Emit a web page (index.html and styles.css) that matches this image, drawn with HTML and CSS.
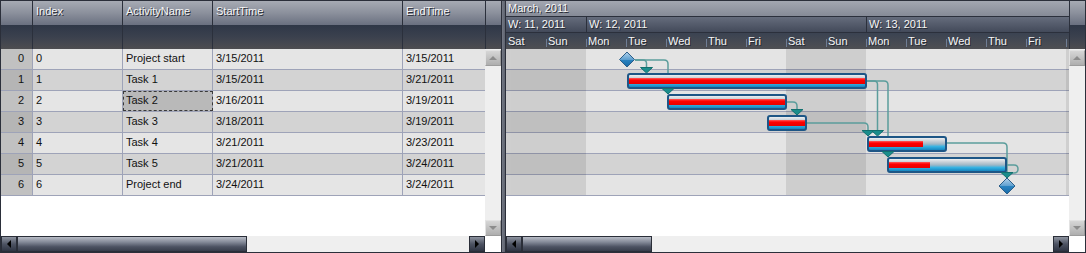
FILE: index.html
```html
<!DOCTYPE html>
<html lang="en">
<head>
  <meta charset="UTF-8">
  <title>Gantt</title>
  <link rel="stylesheet" href="styles.css">
</head>
<body>
  <div class="widget">
    <div class="grid">
      <div class="grid-head">
        <div class="hcell c-rh"></div>
        <div class="hcell c-idx">Index</div>
        <div class="hcell c-name">ActivityName</div>
        <div class="hcell c-start">StartTime</div>
        <div class="hcell c-end">EndTime</div>
        <div class="hcell c-sb"></div>
      </div>
      <div class="grid-body">
        <div class="rows">
          <div class="row"><div class="cell c-rh">0</div><div class="cell c-idx">0</div><div class="cell c-name">Project start</div><div class="cell c-start">3/15/2011</div><div class="cell c-end">3/15/2011</div></div>
          <div class="row odd"><div class="cell c-rh">1</div><div class="cell c-idx">1</div><div class="cell c-name">Task 1</div><div class="cell c-start">3/15/2011</div><div class="cell c-end">3/21/2011</div></div>
          <div class="row"><div class="cell c-rh">2</div><div class="cell c-idx">2</div><div class="cell c-name sel">Task 2</div><div class="cell c-start">3/16/2011</div><div class="cell c-end">3/19/2011</div></div>
          <div class="row odd"><div class="cell c-rh">3</div><div class="cell c-idx">3</div><div class="cell c-name">Task 3</div><div class="cell c-start">3/18/2011</div><div class="cell c-end">3/19/2011</div></div>
          <div class="row"><div class="cell c-rh">4</div><div class="cell c-idx">4</div><div class="cell c-name">Task 4</div><div class="cell c-start">3/21/2011</div><div class="cell c-end">3/23/2011</div></div>
          <div class="row odd"><div class="cell c-rh">5</div><div class="cell c-idx">5</div><div class="cell c-name">Task 5</div><div class="cell c-start">3/21/2011</div><div class="cell c-end">3/24/2011</div></div>
          <div class="row"><div class="cell c-rh">6</div><div class="cell c-idx">6</div><div class="cell c-name">Project end</div><div class="cell c-start">3/24/2011</div><div class="cell c-end">3/24/2011</div></div>
        </div>
        <div class="vscroll">
          <div class="vbtn up"></div>
          <div class="vtrack"></div>
          <div class="vbtn down"></div>
        </div>
      </div>
      <div class="hscroll">
        <div class="hbtn left"></div>
        <div class="thumb"></div>
        <div class="htrack"></div>
        <div class="hbtn right"></div>
        <div class="corner"></div>
      </div>
    </div>

    <div class="splitter"></div>

    <div class="gantt">
      <div class="gantt-head">
        <div class="timeline-head">
          <div class="month">March, 2011</div>
          <div class="weeks">
            <div class="week w-first">W: 11, 2011</div>
            <div class="week w-full">W: 12, 2011</div>
            <div class="week w-rest">W: 13, 2011</div>
          </div>
          <div class="days">
            <div class="day first">Sat</div>
            <div class="day">Sun</div>
            <div class="day">Mon</div>
            <div class="day">Tue</div>
            <div class="day">Wed</div>
            <div class="day">Thu</div>
            <div class="day">Fri</div>
            <div class="day">Sat</div>
            <div class="day">Sun</div>
            <div class="day">Mon</div>
            <div class="day">Tue</div>
            <div class="day">Wed</div>
            <div class="day">Thu</div>
            <div class="day">Fri</div>
            <div class="day"></div>
          </div>
        </div>
        <div class="hcell c-gsb"></div>
      </div>
      <div class="gantt-body">
        <svg class="chart" width="563" height="187" viewBox="0 0 563 187">
          <defs>
            <linearGradient id="barFill" x1="0" y1="0" x2="0" y2="1">
              <stop offset="0" stop-color="#f7f9fa"/>
              <stop offset="0.28" stop-color="#c9d1d8"/>
              <stop offset="0.5" stop-color="#9fb7c6"/>
              <stop offset="0.68" stop-color="#36b2e2"/>
              <stop offset="1" stop-color="#0b78b6"/>
            </linearGradient>
            <linearGradient id="progFill" x1="0" y1="0" x2="0" y2="1">
              <stop offset="0" stop-color="#ff5a5a"/>
              <stop offset="0.35" stop-color="#ff0000"/>
              <stop offset="1" stop-color="#e60000"/>
            </linearGradient>
            <linearGradient id="diaFill" x1="0" y1="0" x2="0" y2="1">
              <stop offset="0" stop-color="#b3d3ec"/>
              <stop offset="0.5" stop-color="#5d9fcf"/>
              <stop offset="0.5" stop-color="#2a84c2"/>
              <stop offset="1" stop-color="#1769a6"/>
            </linearGradient>
          </defs>

          <!-- rows -->
          <rect x="0" y="0" width="563" height="20" fill="#e4e4e4"/>
          <rect x="0" y="21" width="563" height="20" fill="#d3d3d3"/>
          <rect x="0" y="42" width="563" height="20" fill="#e4e4e4"/>
          <rect x="0" y="63" width="563" height="20" fill="#d3d3d3"/>
          <rect x="0" y="84" width="563" height="20" fill="#e4e4e4"/>
          <rect x="0" y="105" width="563" height="20" fill="#d3d3d3"/>
          <rect x="0" y="126" width="563" height="20" fill="#e4e4e4"/>
          <g fill="#9ea3b8">
            <rect x="0" y="20" width="563" height="1"/>
            <rect x="0" y="41" width="563" height="1"/>
            <rect x="0" y="62" width="563" height="1"/>
            <rect x="0" y="83" width="563" height="1"/>
            <rect x="0" y="104" width="563" height="1"/>
            <rect x="0" y="125" width="563" height="1"/>
            <rect x="0" y="146" width="563" height="1"/>
          </g>

          <!-- weekends -->
          <g fill="#000" opacity="0.09">
            <rect x="0" y="0" width="80" height="146"/>
            <rect x="280" y="0" width="80" height="146"/>
            <rect x="560" y="0" width="3" height="146"/>
          </g>

          <!-- links -->
          <g fill="none" stroke="#5b9d9c" stroke-width="1.5">
            <path d="M129 11 H137 Q140.5 11 140.5 14.5 V18"/>
            <path d="M129 11 H158 Q162 11 162 15 V39"/>
            <path d="M281 53 H287 Q291 53 291 57 V60"/>
            <path d="M301 74 H358 Q362 74 362 78 V81"/>
            <path d="M361 32 H368 Q371.5 32 371.5 35.5 V81"/>
            <path d="M361 32 H378 Q382 32 382 36 V102"/>
            <path d="M441 94 H497 Q501 94 501 98 V123"/>
            <path d="M501 116 H508 Q512 116 512 120 Q512 124 508 124 H505"/>
          </g>

          <!-- tasks -->
          <g stroke="#1d5686" stroke-width="2">
            <rect x="122" y="25" width="238" height="14" rx="2" fill="url(#barFill)"/>
            <rect x="162" y="46" width="118" height="14" rx="2" fill="url(#barFill)"/>
            <rect x="262" y="67" width="38" height="14" rx="2" fill="url(#barFill)"/>
            <rect x="362" y="88" width="78" height="14" rx="2" fill="url(#barFill)"/>
            <rect x="382" y="109" width="118" height="14" rx="2" fill="url(#barFill)"/>
          </g>
          <g fill="url(#progFill)">
            <rect x="123" y="29" width="236" height="6"/>
            <rect x="163" y="50" width="116" height="6"/>
            <rect x="263" y="71" width="36" height="6"/>
            <rect x="363" y="92" width="54" height="6"/>
            <rect x="383" y="113" width="41" height="6"/>
          </g>

          <!-- milestones -->
          <g fill="url(#diaFill)" stroke="#2c5e88" stroke-width="1">
            <polygon points="121,3 128.5,10.5 121,18 113.5,10.5"/>
            <polygon points="501,129 509,137 501,145 493,137"/>
          </g>

          <!-- arrow heads -->
          <g fill="#1b8d8c" stroke="#12706f" stroke-width="1">
            <polygon points="134.5,18.5 146.5,18.5 140.5,24"/>
            <polygon points="156,39.5 168,39.5 162,45"/>
            <polygon points="285,60.5 297,60.5 291,66"/>
            <polygon points="356,81.5 368,81.5 362,87"/>
            <polygon points="365.5,81.5 377.5,81.5 371.5,87"/>
            <polygon points="376,102.5 388,102.5 382,108"/>
            <polygon points="495,123.5 507,123.5 501,129"/>
          </g>
        </svg>
        <div class="vscroll">
          <div class="vbtn up"></div>
          <div class="vtrack"></div>
          <div class="vbtn down"></div>
        </div>
      </div>
      <div class="hscroll">
        <div class="hbtn left"></div>
        <div class="thumb"></div>
        <div class="htrack"></div>
        <div class="hbtn right"></div>
        <div class="corner"></div>
      </div>
    </div>
  </div>
</body>
</html>
```

FILE: styles.css
```css
body {
  margin: 0;
  font-family: "Liberation Sans", Arial, sans-serif;
  font-size: 11px;
  background: #fff;
}
.widget {
  display: flex;
  width: 1086px;
  height: 253px;
  box-sizing: border-box;
  border: 1px solid #2b2f3a;
  background: #fff;
}

/* grid */
.grid {
  width: 500px;
  display: flex;
  flex-direction: column;
}
.grid-head {
  display: flex;
  height: 48px;
}
.hcell {
  box-sizing: border-box;
  height: 48px;
  flex: none;
  border-right: 1px solid #2b303c;
  padding: 3px 0 0 3px;
  line-height: 14px;
  color: #f6f6f6;
  text-shadow: 1px 1px 0 #262a34;
  background: linear-gradient(to bottom, #a7abb4 0, #8b909c 12px, #6a7080 24px, #2f3747 24px, #3b414e 36px, #4d4d50 48px);
}
.c-rh { width: 32px; }
.c-idx, .c-name { width: 90px; }
.c-start { width: 190px; }
.c-end { width: 83px; }
.hcell.c-sb {
  width: 15px;
  border-right: 0;
}
.grid-body {
  display: flex;
  height: 187px;
}
.rows {
  width: 484px;
}
.row {
  display: flex;
  height: 21px;
  box-sizing: border-box;
  border-bottom: 1px solid #9ea3b8;
  background: #e5e5e5;
}
.row.odd {
  background: #d3d3d3;
}
.cell {
  box-sizing: border-box;
  flex: none;
  border-right: 1px solid #9ea3b8;
  padding-left: 3px;
  line-height: 19px;
  color: #111;
  white-space: nowrap;
  overflow: hidden;
}
.row .c-end {
  width: 82px;
  border-right: 0;
}
.cell.c-rh {
  background: #c1c1c1;
  text-align: right;
  padding: 0 8px 0 0;
}
.row.odd .cell.c-rh {
  background: #b5b5b5;
}
.cell.sel {
  background: #b9b9b9;
  outline: 1px dashed #3a3a3a;
  outline-offset: -1px;
}

/* scrollbars */
.vscroll {
  width: 16px;
  flex: none;
  display: flex;
  flex-direction: column;
  background: #efefef;
  padding-top: 1px;
  box-sizing: border-box;
}
.vbtn {
  height: 16px;
  box-sizing: border-box;
  border: 1px solid #e2e2e2;
  border-right-color: #9c9c9c;
  border-bottom-color: #9c9c9c;
  background: linear-gradient(#d6d6d6, #aeaeae);
  display: flex;
  align-items: center;
  justify-content: center;
}
.vbtn::after {
  content: "";
  border-left: 4px solid transparent;
  border-right: 4px solid transparent;
}
.vbtn.up::after { border-bottom: 4px solid #8c8c8c; }
.vbtn.down::after { border-top: 4px solid #8c8c8c; }
.vtrack { flex: 1; }

.hscroll {
  display: flex;
  height: 16px;
  background: #efefef;
}
.hbtn {
  width: 16px;
  flex: none;
  box-sizing: border-box;
  border: 1px solid #2a2e38;
  background: linear-gradient(#8d939f, #4d5363 50%, #2f3543);
  display: flex;
  align-items: center;
  justify-content: center;
}
.hbtn::after {
  content: "";
  border-top: 4px solid transparent;
  border-bottom: 4px solid transparent;
}
.hbtn.left::after { border-right: 4px solid #000; }
.hbtn.right::after { border-left: 4px solid #000; }
.thumb {
  flex: none;
  box-sizing: border-box;
  border: 1px solid #2a2e38;
  background: linear-gradient(#b8bcc6, #868c9a 35%, #4c5262 70%, #373d4b);
}
.grid .thumb { width: 230px; }
.gantt .thumb { width: 130px; }
.htrack { flex: 1; }
.corner {
  width: 16px;
  flex: none;
  background: #fff;
}

.splitter {
  width: 5px;
  flex: none;
  background: linear-gradient(to right, #2b2f3a 1px, #737884 1px, #5e636f 4px, #2b2f3a 4px);
}

/* gantt */
.gantt {
  flex: 1;
  display: flex;
  flex-direction: column;
}
.gantt-head {
  display: flex;
  height: 48px;
}
.timeline-head {
  width: 563px;
  overflow: hidden;
  color: #f6f6f6;
  text-shadow: 1px 1px 0 #262a34;
}
.month {
  height: 16px;
  box-sizing: border-box;
  border-bottom: 1px solid #2b303c;
  padding-left: 2px;
  line-height: 15px;
  background: linear-gradient(#a3a7b1, #868b97);
}
.weeks {
  display: flex;
  height: 16px;
  box-sizing: border-box;
  border-bottom: 1px solid #2b303c;
  line-height: 15px;
  background: linear-gradient(#656c7c, #434a5a);
}
.week {
  flex: none;
  box-sizing: border-box;
  padding-left: 2px;
  white-space: nowrap;
}
.w-first { width: 80px; }
.w-full {
  width: 280px;
  border-left: 1px solid #2b303c;
}
.w-rest {
  flex: 1;
  border-left: 1px solid #2b303c;
}
.days {
  display: flex;
  height: 16px;
  line-height: 16px;
  background: linear-gradient(#3b4352, #4e4f53);
}
.day {
  width: 40px;
  flex: none;
  box-sizing: border-box;
  padding-left: 2px;
  white-space: nowrap;
  background: linear-gradient(#6f7d94, #6f7d94) no-repeat 0 6px / 1px 8px;
}
.day.first {
  background: none;
}
.hcell.c-gsb {
  width: 16px;
  border-right: 0;
  border-left: 1px solid #2b303c;
}
.gantt-body {
  display: flex;
  height: 187px;
}
.chart {
  display: block;
  flex: none;
}
```
